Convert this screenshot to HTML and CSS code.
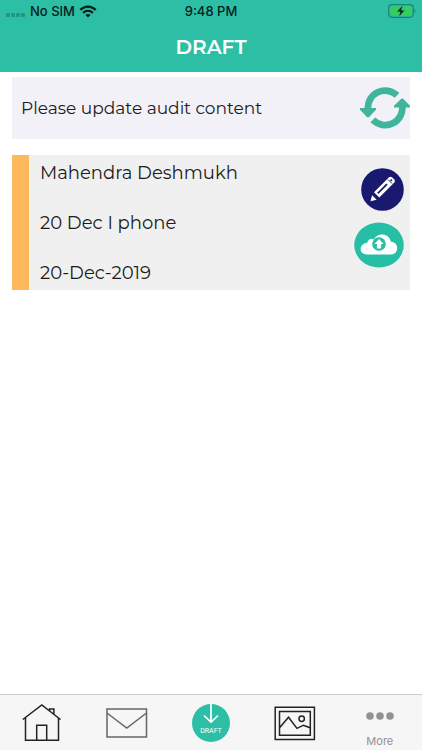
FILE: index.html
```html
<!DOCTYPE html>
<html lang="en">
<head>
<meta charset="utf-8">
<meta name="viewport" content="width=device-width, initial-scale=1">
<title>Draft</title>
<link rel="stylesheet" href="styles.css">
</head>
<body>
<header class="header">
  <div class="status">
    <div class="carrier">
      <svg width="20" height="4" viewBox="0 0 20 4" fill="#239581" aria-hidden="true"><rect width="4" height="4" rx="1"/><rect x="5" width="4" height="4" rx="1"/><rect x="10" width="4" height="4" rx="1"/><rect x="15" width="4" height="4" rx="1"/></svg>
      <span>No SIM</span>
      <svg class="wifi" width="18" height="13" viewBox="0 0 18 13" fill="none" stroke="#06201b" stroke-width="2.3" aria-hidden="true"><path d="M1.3 4.8C5.8.5 12.2.5 16.7 4.8M4.1 7.8c2.9-2.6 6.9-2.6 9.8 0"/><path d="M9 12.6 6.3 10c1.6-1.4 3.8-1.4 5.4 0z" fill="#06201b" stroke="none"/></svg>
    </div>
    <span>9:48 PM</span>
    <svg class="battery" width="28" height="14" viewBox="0 0 28 14" aria-hidden="true"><rect x=".7" y=".7" width="24.6" height="12.6" rx="3.5" fill="none" stroke="#1f8270" stroke-width="1.2"/><rect x="2.5" y="2.5" width="21" height="9" rx="2" fill="#35cf58"/><path d="M26.5 5v4c1.4-.6 1.4-3.4 0-4z" fill="#1f8270"/><path d="M14.8 1 8.8 7.8h3.4L10.8 13l6-6.8h-3.4z" fill="#06201b" stroke="#2cbfa6" stroke-width=".5"/></svg>
  </div>
  <h1 class="title">DRAFT</h1>
</header>
<main class="content">
  <section class="notice">
    <p>Please update audit content</p>
    <button class="icon-button refresh" aria-label="Refresh">
      <svg width="50" height="42" viewBox="0 .7 50.5 42" aria-hidden="true"><g fill="none" stroke="#3eb59c" stroke-width="6.8"><path d="M37.4 9A17.4 17.4 0 0 0 8 23"/><path d="M13 33.8A17.4 17.4 0 0 0 42.6 19"/></g><path d="M0 21.7h16.2v1.8l-7 7.4q-1.1 1-2.2 0l-7-7.4zM34.4 21.2v-1.7l7-6.9q1.2-1 2.4 0l6.7 6.9v1.7z" fill="#3eb59c"/></svg>
    </button>
  </section>
  <article class="draft">
    <div class="details">
      <p>Mahendra Deshmukh</p>
      <p>20 Dec I phone</p>
      <p>20-Dec-2019</p>
    </div>
    <div class="actions">
      <button class="icon-button" aria-label="Edit">
        <svg width="43" height="43" viewBox="0 0 43 43" aria-hidden="true"><circle cx="21.5" cy="21.5" r="21.3" fill="#191970"/><path d="m9.5 33.2 1.6-6 4.5 4.5z" fill="#fff"/><path d="M13 24.2 28 9.3q1.5-1.3 3 0l2.3 2.3q1.4 1.5 0 3L18.3 29.5z" fill="#fff"/><path d="m16.8 25.4 9.2-9.2" stroke="#191970" stroke-width="1.7"/><path d="m27 11.5 4 4" stroke="#191970" stroke-width="1"/><circle cx="30.3" cy="12.3" r="1" fill="#191970"/></svg>
      </button>
      <button class="icon-button" aria-label="Upload">
        <svg width="50" height="46" viewBox="0 0 50 46" aria-hidden="true"><ellipse cx="25" cy="23" rx="24.8" ry="22.5" fill="#26bfa6"/><path d="M13 32.5C4.600 32.500 4.600 21.600 13.200 20.800c1-4 4.200-4.800 6.600-3.500 3.900-7 15.300-6.300 17.100 2.500 8.300.2 8.600 12.700 0 12.700z" fill="#fff"/><circle cx="25" cy="22" r="6.8" fill="#26bfa6"/><path d="m25 17.100 4.600 5h-2.500v4.400h-4.200v-4.400h-2.500z" fill="#fff"/></svg>
      </button>
    </div>
  </article>
</main>
<nav class="tabs" aria-label="Main">
  <a href="#home" aria-label="Home"><svg width="40" height="40" viewBox="0 0 40 40" fill="none" stroke="#222" stroke-width="1.5" aria-hidden="true"><path d="M.8 16.5 19.800 2l18.700 14.500M3.500 14.500V37.300h33V14.500M14.700 37V22.300h10V37M27.600 7.800V5.900h4.300V11"/></svg></a>
  <a href="#mail" aria-label="Mail"><svg width="42" height="30" viewBox="0 0 42 30" fill="none" stroke="#666" stroke-width="1.5" aria-hidden="true"><path d="M1 1h39.500v28H1zM1 5l19.800 15L40.500 5"/></svg></a>
  <a href="#draft" class="draft-tab" aria-current="page"><svg width="16" height="19" viewBox="0 0 16 19" fill="none" stroke="#fff" stroke-width="1.7" aria-hidden="true"><path d="M8 0v18M1 11.500l7 6.700 7-6.700"/></svg><span>DRAFT</span></a>
  <a href="#gallery" aria-label="Gallery"><svg width="42" height="36" viewBox="0 0 42 36" fill="none" stroke="#222" stroke-width="1.5" aria-hidden="true"><path d="M1.200 2.200h39.200v32.200H1.200zM5.500 6.400h30.800v23.800H5.500zM5.800 22.500l8.700-10.300 8.500 11.200 6.500-3.200 6.500 2.500"/><circle cx="27.700" cy="13.700" r="2.700"/></svg></a>
  <a href="#more" class="more"><svg width="28" height="8" viewBox="0 0 28 8" fill="#929292" aria-hidden="true"><circle cx="4" cy="4" r="3.800"/><circle cx="14" cy="4" r="3.800"/><circle cx="24" cy="4" r="3.800"/></svg><span>More</span></a>
</nav>
</body>
</html>
```
FILE: styles.css
```css
* {
  box-sizing: border-box;
}

body {
  margin: 0;
  min-height: 100vh;
  display: flex;
  flex-direction: column;
  background: #fff;
  color: #1b1b1d;
  font: 18px/24px Montserrat, Inter, sans-serif;
}

p,
h1 {
  margin: 0;
}

.header {
  background: #2cbfa6;
}

.status {
  display: grid;
  grid-template-columns: 1fr auto 1fr;
  align-items: center;
  height: 22px;
  padding: 0 6px;
  color: #06201b;
  font: 500 13px/22px Inter, sans-serif;
}

.carrier {
  display: flex;
  align-items: center;
  gap: 4px;
}

.carrier svg:first-child {
  margin-top: 8px;
}

.battery {
  justify-self: end;
}

.title {
  padding: 13px 0;
  color: #fff;
  font-size: 20px;
  font-weight: 600;
  line-height: 24px;
  text-align: center;
}

.content {
  flex: 1;
  display: flex;
  flex-direction: column;
  gap: 16px;
  padding: 5px 12px;
}

.notice {
  display: flex;
  align-items: center;
  justify-content: space-between;
  height: 62px;
  padding-left: 9px;
  background: #f2f1f8;
  font-size: 17px;
}

.icon-button {
  display: block;
  padding: 0;
  border: 0;
  background: none;
  cursor: pointer;
}

.icon-button svg {
  display: block;
}

.draft {
  display: flex;
  justify-content: space-between;
  border-left: 17px solid #ffb95c;
  background: #f0f0f0;
}

.details {
  display: flex;
  flex-direction: column;
  gap: 26px;
  padding: 6px 11px 5px;
}

.actions {
  display: flex;
  flex-direction: column;
  align-items: flex-end;
  gap: 11px;
  padding: 13px 6px;
}

.tabs {
  display: grid;
  grid-template-columns: repeat(5, 1fr);
  place-items: center;
  height: 56px;
  border-top: 1px solid #ccc;
  background: #f6f6f6;
}

.tabs a {
  display: flex;
  color: inherit;
  text-decoration: none;
}

.tabs .draft-tab {
  flex-direction: column;
  align-items: center;
  width: 38px;
  height: 38px;
  border-radius: 50%;
  background: #2cbfa6;
  color: #fff;
  font: 7px/16px Roboto, sans-serif;
}

.tabs .more {
  flex-direction: column;
  align-items: center;
  align-self: end;
  gap: 13px;
  padding-bottom: 1px;
  color: #929292;
  font: 11px/16px Inter, sans-serif;
}
```
